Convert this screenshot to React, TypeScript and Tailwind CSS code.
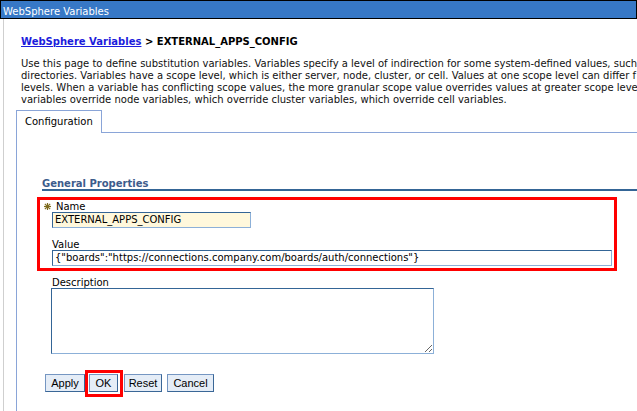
import React from "react";

const lines = [
  "Use this page to define substitution variables. Variables specify a level of indirection for some system-defined values, such",
  "directories. Variables have a scope level, which is either server, node, cluster, or cell. Values at one scope level can differ f",
  "levels. When a variable has conflicting scope values, the more granular scope value overrides values at greater scope leve",
  "variables override node variables, which override cluster variables, which override cell variables.",
];

function Asterisk() {
  return (
    <svg width="7" height="7" viewBox="0 0 7 7" className="shrink-0">
      <g stroke="#7d6b1e" strokeWidth="1.2" strokeLinecap="square">
        <line x1="3.5" y1="0.5" x2="3.5" y2="6.5" />
        <line x1="0.5" y1="3.5" x2="6.5" y2="3.5" />
        <line x1="1.3" y1="1.3" x2="5.7" y2="5.7" />
        <line x1="5.7" y1="1.3" x2="1.3" y2="5.7" />
      </g>
    </svg>
  );
}

const btn =
  "h-[18px] flex items-center justify-center bg-[#e5edf7] border border-[#7596c2] border-r-[#3a6797] border-b-[#3a6797] text-[11px] leading-none text-black font-['Liberation_Sans',Arial,sans-serif]";

const field =
  "h-[16px] border border-[#346596] border-r-[#8cb0d8] border-b-[#8cb0d8] pl-[2px] leading-[14px] text-black whitespace-nowrap overflow-hidden";

export default function App() {
  return (
    <div className="w-[637px] h-[411px] overflow-hidden bg-white flex flex-col font-['DejaVu_Sans',Verdana,sans-serif] text-[10px] text-[#111]">
      <div className="h-[19px] shrink-0 border border-black bg-[#3778c6] text-white pl-[2px] pt-[5px] leading-[12px] whitespace-nowrap">
        WebSphere Variables
      </div>
      <div className="flex-1 ml-[3px] border-l border-[#cfcfcf] pl-[12px] flex flex-col min-h-0">
        <div className="ml-[5px] mt-[17px] leading-[12px] font-bold whitespace-nowrap">
          <a className="text-[#1c1cdc] underline">WebSphere Variables</a>
          <span className="text-black"> &gt; EXTERNAL_APPS_CONFIG</span>
        </div>
        <div className="ml-[5px] mt-[10px] leading-[12px]">
          {lines.map((l, i) => (
            <div key={i} className="whitespace-nowrap">
              {l}
            </div>
          ))}
        </div>
        <div className="mt-[4px] flex h-[23px] shrink-0">
          <div className="w-[86px] shrink-0 border-t border-l border-r border-[#8aa5d8] pl-[8px] pt-[5px] leading-[12px] text-black whitespace-nowrap">
            Configuration
          </div>
          <div className="flex-1 border-b border-[#8aa5d8]" />
        </div>
        <div className="flex-1 border-l border-[#8aa5d8] pl-[25px] flex flex-col">
          <div className="mt-[45px] leading-[11px] font-bold text-[#3d5c8c] border-b-2 border-[#346596] whitespace-nowrap">
            General Properties
          </div>
          <div className="mt-[6px] -ml-[5px] w-[580px] border-[3px] border-[#ff0000] pl-[12px] pt-[1px] pb-[2px]">
            <div className="-ml-[8px] flex items-center leading-[11px] text-black">
              <Asterisk />
              <span className="ml-[5px]">Name</span>
            </div>
            <div className={`${field} w-[199px] bg-[#fff8dc]`}>EXTERNAL_APPS_CONFIG</div>
            <div className="mt-[11px] leading-[11px] text-black">Value</div>
            <div className={`${field} w-[560px] bg-white`}>
              {'{"boards":"https://connections.company.com/boards/auth/connections"}'}
            </div>
          </div>
          <div className="mt-[7px] ml-[10px] leading-[10px] text-black">Description</div>
          <textarea
            readOnly
            className="block ml-[9px] w-[383px] h-[66px] bg-white border border-[#346596] border-r-[#8cb0d8] border-b-[#8cb0d8] outline-none resize"
          />
          <div className="mt-[16px] ml-[3px] flex items-start">
            <button className={`${btn} w-[40px] mt-[4px]`}>Apply</button>
            <div className="border-[3px] border-[#ff0000] pl-[1px] pr-[2px] pt-[1px] pb-[2px]">
              <button className={`${btn} w-[29px]`}>OK</button>
            </div>
            <button className={`${btn} w-[38px] mt-[4px] ml-[1px]`}>Reset</button>
            <button className={`${btn} w-[47px] mt-[4px] ml-[5px]`}>Cancel</button>
          </div>
        </div>
      </div>
    </div>
  );
}
